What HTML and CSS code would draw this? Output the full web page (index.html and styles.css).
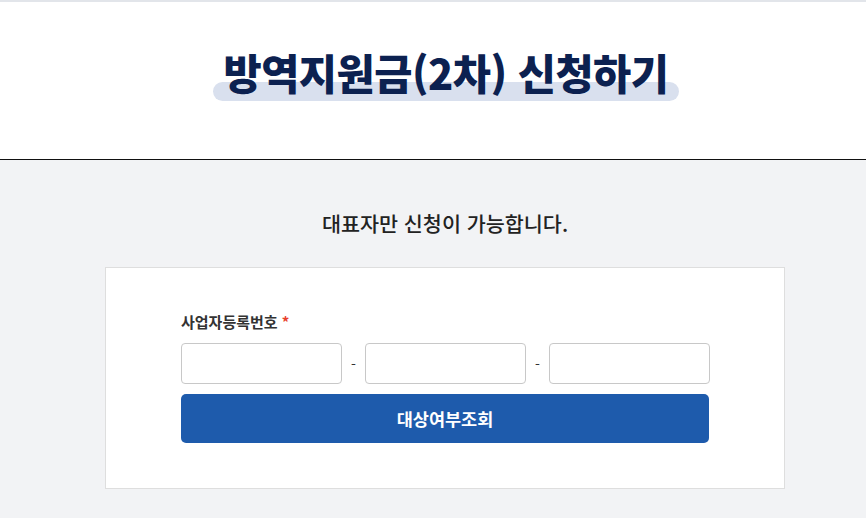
FILE: index.html
```html
<!DOCTYPE html>
<html lang="ko">
<head>
<meta charset="utf-8">
<link rel="stylesheet" href="styles.css">
</head>
<body>
<div class="topstrip"></div>
<header class="header">
  <h1 class="title"><span class="title-text">방역지원금(2차) 신청하기</span></h1>
</header>
<main class="main">
  <p class="notice">대표자만 신청이 가능합니다.</p>
  <section class="card">
    <div class="form">
      <label class="label">사업자등록번호 <span class="req">*</span></label>
      <div class="bizno">
        <input class="field" type="text">
        <span class="dash">-</span>
        <input class="field" type="text">
        <span class="dash">-</span>
        <input class="field" type="text">
      </div>
      <button class="btn" type="button">대상여부조회</button>
    </div>
  </section>
</main>
</body>
</html>
```
FILE: styles.css
```css
* { box-sizing: border-box; }
html, body { margin: 0; padding: 0; }
body {
  font-family: "Noto Sans CJK KR", "Noto Sans", sans-serif;
  background: #f2f3f5;
  color: #222;
  height: 518px;
  overflow: hidden;
}
.topstrip { height: 2px; background: #e2e5ea; }
.header {
  background: #fff;
  height: 158px;
  border-bottom: 1px solid #111;
  display: flex;
  justify-content: center;
  padding-left: 26px;
}
.title {
  margin: 0;
  padding-top: 41px;
  font-size: 41.5px;
  font-weight: 900;
  color: #0c2150;
  line-height: 1.4;
  letter-spacing: -0.5px;
}
.title-text {
  position: relative;
  display: inline-block;
  z-index: 0;
}
.title-text::before {
  content: "";
  position: absolute;
  left: -11px;
  right: -11px;
  top: 39px;
  height: 19px;
  border-radius: 10px;
  background: #d9e0ee;
  z-index: -1;
}
.main {
  display: flex;
  flex-direction: column;
  align-items: center;
  padding-left: 24px;
}
.notice {
  margin: 48px 0 0;
  font-size: 20.7px;
  font-weight: 500;
  color: #222;
  line-height: 30px;
}
.card {
  margin-top: 29px;
  width: 680px;
  height: 222px;
  background: #fff;
  border: 1px solid #dedede;
  padding: 44px 74px 0 75px;
}
.form { display: flex; flex-direction: column; }
.label {
  font-size: 15px;
  font-weight: 700;
  color: #333;
  line-height: 20px;
}
.req { color: #e8402c; }
.bizno {
  margin-top: 11px;
  display: flex;
  align-items: center;
  gap: 7px;
}
.field {
  width: 161px;
  height: 41px;
  border: 1px solid #c8c8c8;
  border-radius: 4px;
  background: #fff;
  margin: 0;
}
.dash {
  width: 8px;
  text-align: center;
  font-size: 14px;
  color: #333;
}
.bizno .field + .dash { margin: 0 1px; }
.btn {
  margin-top: 10px;
  width: 528px;
  height: 49px;
  border: 0;
  border-radius: 5px;
  background: #1e5bac;
  color: #fff;
  font-family: "Noto Sans CJK KR", sans-serif;
  font-size: 17.5px;
  font-weight: 700;
}
```
